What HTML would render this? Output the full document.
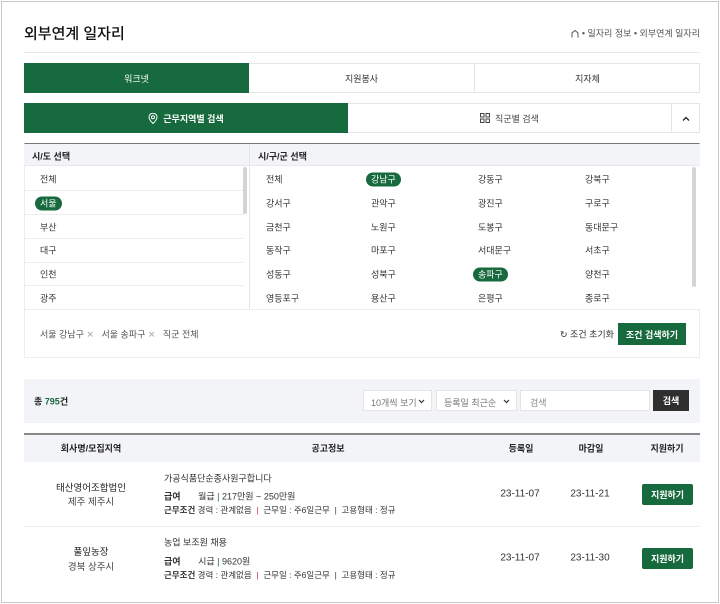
<!DOCTYPE html>
<html><head><meta charset="utf-8"><style>
*{margin:0;padding:0;box-sizing:border-box}
body{width:720px;height:604px;background:#fff;font-family:"Liberation Sans","Noto Sans CJK KR",sans-serif;color:#333;position:relative;overflow:hidden;font-size:9px}
.a{position:absolute}
.frame{left:1px;top:1px;width:718px;height:602px;border:1px solid #c8c8c8}
.c{display:flex;align-items:center;justify-content:center}
.g{background:#166a3d;color:#fff}
.pill{background:#166a3d;color:#fff;border-radius:9px;padding:2px 5px;margin-left:-5px}
.t{transform:translateY(-50%)}
.cx{transform:translate(-50%,-50%);white-space:nowrap}
.chev{position:absolute;right:6px;top:8px}
</style></head><body>
<div class="a frame"></div>
<div class="a t" style="left:24px;top:33px;font-size:15px;color:#111;font-weight:500">외부연계 일자리</div>
<div class="a t" style="right:20px;top:33px;font-size:9px;color:#555;white-space:nowrap"><svg width="8" height="8" viewBox="0 0 8 8" style="vertical-align:-1px"><path d="M1 8V3.5L4 1l3 2.5V8" fill="none" stroke="#555" stroke-width="1"/></svg> • 일자리 정보 • 외부연계 일자리</div>
<div class="a" style="left:24px;top:52px;width:676px;height:1px;background:#e8e8ee"></div>

<div class="a" style="left:24px;top:63px;width:676px;height:30px;border:1px solid #e4e4ea"></div>
<div class="a c g" style="left:24px;top:63px;width:225px;height:30px">워크넷</div>
<div class="a c" style="left:249px;top:63px;width:226px;height:30px;border-right:1px solid #e4e4ea">지원봉사</div>
<div class="a c" style="left:475px;top:63px;width:225px;height:30px">지자체</div>

<div class="a" style="left:24px;top:103px;width:676px;height:30px;border:1px solid #e4e4ea"></div>
<div class="a c g" style="left:24px;top:103px;width:324px;height:30px;font-weight:bold"><svg width="10" height="11" viewBox="0 0 10 11" style="margin-right:5px"><path d="M5 10.5C2 7.5 1 6 1 4.2A4 4 0 0 1 9 4.2C9 6 8 7.5 5 10.5Z" fill="none" stroke="#fff"/><circle cx="5" cy="4.3" r="1.5" fill="none" stroke="#fff"/></svg>근무지역별 검색</div>
<div class="a c" style="left:348px;top:103px;width:323px;height:30px;color:#444"><svg width="10" height="10" viewBox="0 0 10 10" style="margin-right:5px"><rect x=".5" y=".5" width="3.5" height="3.5" fill="none" stroke="#444"/><rect x="6" y=".5" width="3.5" height="3.5" fill="none" stroke="#444"/><rect x=".5" y="6" width="3.5" height="3.5" fill="none" stroke="#444"/><rect x="6" y="6" width="3.5" height="3.5" fill="none" stroke="#444"/></svg>직군별 검색</div>
<div class="a c" style="left:671px;top:103px;width:29px;height:30px;border-left:1px solid #e4e4ea"><svg width="8" height="5" viewBox="0 0 8 5"><path d="M1 4.5L4 1.5 7 4.5" fill="none" stroke="#222" stroke-width="1.3"/></svg></div>

<div class="a" style="left:24px;top:143px;width:676px;height:215px;border:1px solid #ececf1;border-top:1px solid #777"></div>
<div class="a" style="left:24px;top:144px;width:676px;height:22px;background:#f3f4f7;border-bottom:1px solid #e8e8ee"></div>
<div class="a" style="left:249px;top:144px;width:1px;height:166px;background:#e4e4ea"></div>
<div class="a t" style="left:32px;top:156px;color:#222;font-weight:bold">시/도 선택</div>
<div class="a t" style="left:258px;top:156px;color:#222;font-weight:bold">시/구/군 선택</div>
<div class="a" style="left:250px;top:166px;width:450px;height:144px;background:#fff"></div>
<div class="a" style="left:24px;top:190px;width:220px;height:1px;background:#ececf1"></div>
<div class="a" style="left:24px;top:214px;width:220px;height:1px;background:#ececf1"></div>
<div class="a" style="left:24px;top:238px;width:220px;height:1px;background:#ececf1"></div>
<div class="a" style="left:24px;top:262px;width:220px;height:1px;background:#ececf1"></div>
<div class="a" style="left:24px;top:285px;width:220px;height:1px;background:#ececf1"></div>
<div class="a" style="left:24px;top:309px;width:676px;height:1px;background:#ececf1"></div>
<div class="a" style="left:243px;top:167px;width:4px;height:47px;background:#d4d4d8;border-radius:2px"></div>
<div class="a" style="left:692px;top:167px;width:4px;height:120px;background:#d4d4d8;border-radius:2px"></div>
<div class="a t" style="left:40px;top:179px">전체</div>
<div class="a t" style="left:40px;top:203px"><span class="pill">서울</span></div>
<div class="a t" style="left:40px;top:227px">부산</div>
<div class="a t" style="left:40px;top:250px">대구</div>
<div class="a t" style="left:40px;top:274px">인천</div>
<div class="a t" style="left:40px;top:298px">광주</div>

<div class="a t" style="left:266px;top:179px">전체</div><div class="a t" style="left:371px;top:179px"><span class="pill">강남구</span></div><div class="a t" style="left:478px;top:179px">강동구</div><div class="a t" style="left:585px;top:179px">강북구</div>
<div class="a t" style="left:266px;top:203px">강서구</div><div class="a t" style="left:371px;top:203px">관악구</div><div class="a t" style="left:478px;top:203px">광진구</div><div class="a t" style="left:585px;top:203px">구로구</div>
<div class="a t" style="left:266px;top:227px">금천구</div><div class="a t" style="left:371px;top:227px">노원구</div><div class="a t" style="left:478px;top:227px">도봉구</div><div class="a t" style="left:585px;top:227px">동대문구</div>
<div class="a t" style="left:266px;top:250px">동작구</div><div class="a t" style="left:371px;top:250px">마포구</div><div class="a t" style="left:478px;top:250px">서대문구</div><div class="a t" style="left:585px;top:250px">서초구</div>
<div class="a t" style="left:266px;top:274px">성동구</div><div class="a t" style="left:371px;top:274px">성북구</div><div class="a t" style="left:478px;top:274px"><span class="pill">송파구</span></div><div class="a t" style="left:585px;top:274px">양천구</div>
<div class="a t" style="left:266px;top:298px">영등포구</div><div class="a t" style="left:371px;top:298px">용산구</div><div class="a t" style="left:478px;top:298px">은평구</div><div class="a t" style="left:585px;top:298px">종로구</div>

<div class="a t" style="left:40px;top:334px;color:#555;white-space:nowrap">서울 강남구 <span style="color:#aaa">✕</span>&nbsp;&nbsp;&nbsp;서울 송파구 <span style="color:#aaa">✕</span>&nbsp;&nbsp;&nbsp;직군 전체</div>
<div class="a t" style="left:560px;top:334px;color:#333;white-space:nowrap">↻ 조건 초기화</div>
<div class="a c g" style="left:618px;top:323px;width:68px;height:22px;font-weight:bold">조건 검색하기</div>

<div class="a" style="left:24px;top:379px;width:676px;height:44px;background:#f3f4f7"></div>
<div class="a t" style="left:34px;top:401px;font-weight:bold;color:#222">총 <span style="color:#166a3d">795</span>건</div>
<div class="a" style="left:363px;top:390px;width:69px;height:21px;background:#fff;border:1px solid #e4e4ea;color:#777;padding:5px 0 0 7px">10개씩 보기<svg class="chev" width="7" height="5" viewBox="0 0 7 5"><path d="M1 1l2.5 2.5L6 1" fill="none" stroke="#333" stroke-width="1.2"/></svg></div>
<div class="a" style="left:436px;top:390px;width:81px;height:21px;background:#fff;border:1px solid #e4e4ea;color:#777;padding:5px 0 0 7px">등록일 최근순<svg class="chev" width="7" height="5" viewBox="0 0 7 5"><path d="M1 1l2.5 2.5L6 1" fill="none" stroke="#333" stroke-width="1.2"/></svg></div>
<div class="a" style="left:520px;top:390px;width:130px;height:21px;background:#fff;border:1px solid #e4e4ea;color:#888;padding:5px 0 0 9px">검색</div>
<div class="a c" style="left:653px;top:390px;width:36px;height:21px;background:#2f2f2f;color:#fff;font-weight:bold">검색</div>

<div class="a" style="left:24px;top:433px;width:676px;height:29px;background:#f3f4f7;border-top:2px solid #888"></div>
<div class="a cx" style="left:91px;top:448px;font-weight:bold;color:#222">회사명/모집지역</div>
<div class="a cx" style="left:328px;top:448px;font-weight:bold;color:#222">공고정보</div>
<div class="a cx" style="left:521px;top:448px;font-weight:bold;color:#222">등록일</div>
<div class="a cx" style="left:591px;top:448px;font-weight:bold;color:#222">마감일</div>
<div class="a cx" style="left:667px;top:448px;font-weight:bold;color:#222">지원하기</div>
<div class="a" style="left:24px;top:526px;width:676px;height:1px;background:#ececf1"></div>

<div class="a cx" style="left:91px;top:487px;font-size:9.5px;color:#222">태산영어조합법인</div>
<div class="a cx" style="left:91px;top:501px;font-size:9.5px;color:#444">제주 제주시</div>
<div class="a t" style="left:164px;top:478px">가공식품단순종사원구합니다</div>
<div class="a t" style="left:164px;top:496px;white-space:nowrap"><b>급여</b>&nbsp;&nbsp;&nbsp;&nbsp;&nbsp;&nbsp;&nbsp;월급 <span style="color:#166a3d">|</span> 217만원 ~ 250만원</div>
<div class="a t" style="left:164px;top:510px;white-space:nowrap;font-size:8.5px"><b>근무조건</b> 경력 : 관계없음 &nbsp;<span style="color:#c33">|</span>&nbsp; 근무일 : 주6일근무 &nbsp;|&nbsp; 고용형태 : 정규</div>
<div class="a cx" style="left:520px;top:494px;font-size:10px">23-11-07</div>
<div class="a cx" style="left:590px;top:494px;font-size:10px">23-11-21</div>
<div class="a c g" style="left:642px;top:484px;width:51px;height:21px;border-radius:2px;font-weight:bold">지원하기</div>

<div class="a cx" style="left:91px;top:551px;font-size:9.5px;color:#222">풀잎농장</div>
<div class="a cx" style="left:91px;top:566px;font-size:9.5px;color:#444">경북 상주시</div>
<div class="a t" style="left:164px;top:542px">농업 보조원 채용</div>
<div class="a t" style="left:164px;top:561px;white-space:nowrap"><b>급여</b>&nbsp;&nbsp;&nbsp;&nbsp;&nbsp;&nbsp;&nbsp;시급 <span style="color:#166a3d">|</span> 9620원</div>
<div class="a t" style="left:164px;top:575px;white-space:nowrap;font-size:8.5px"><b>근무조건</b> 경력 : 관계없음 &nbsp;<span style="color:#c33">|</span>&nbsp; 근무일 : 주6일근무 &nbsp;|&nbsp; 고용형태 : 정규</div>
<div class="a cx" style="left:520px;top:558px;font-size:10px">23-11-07</div>
<div class="a cx" style="left:590px;top:558px;font-size:10px">23-11-30</div>
<div class="a c g" style="left:642px;top:548px;width:51px;height:21px;border-radius:2px;font-weight:bold">지원하기</div>
</body></html>
